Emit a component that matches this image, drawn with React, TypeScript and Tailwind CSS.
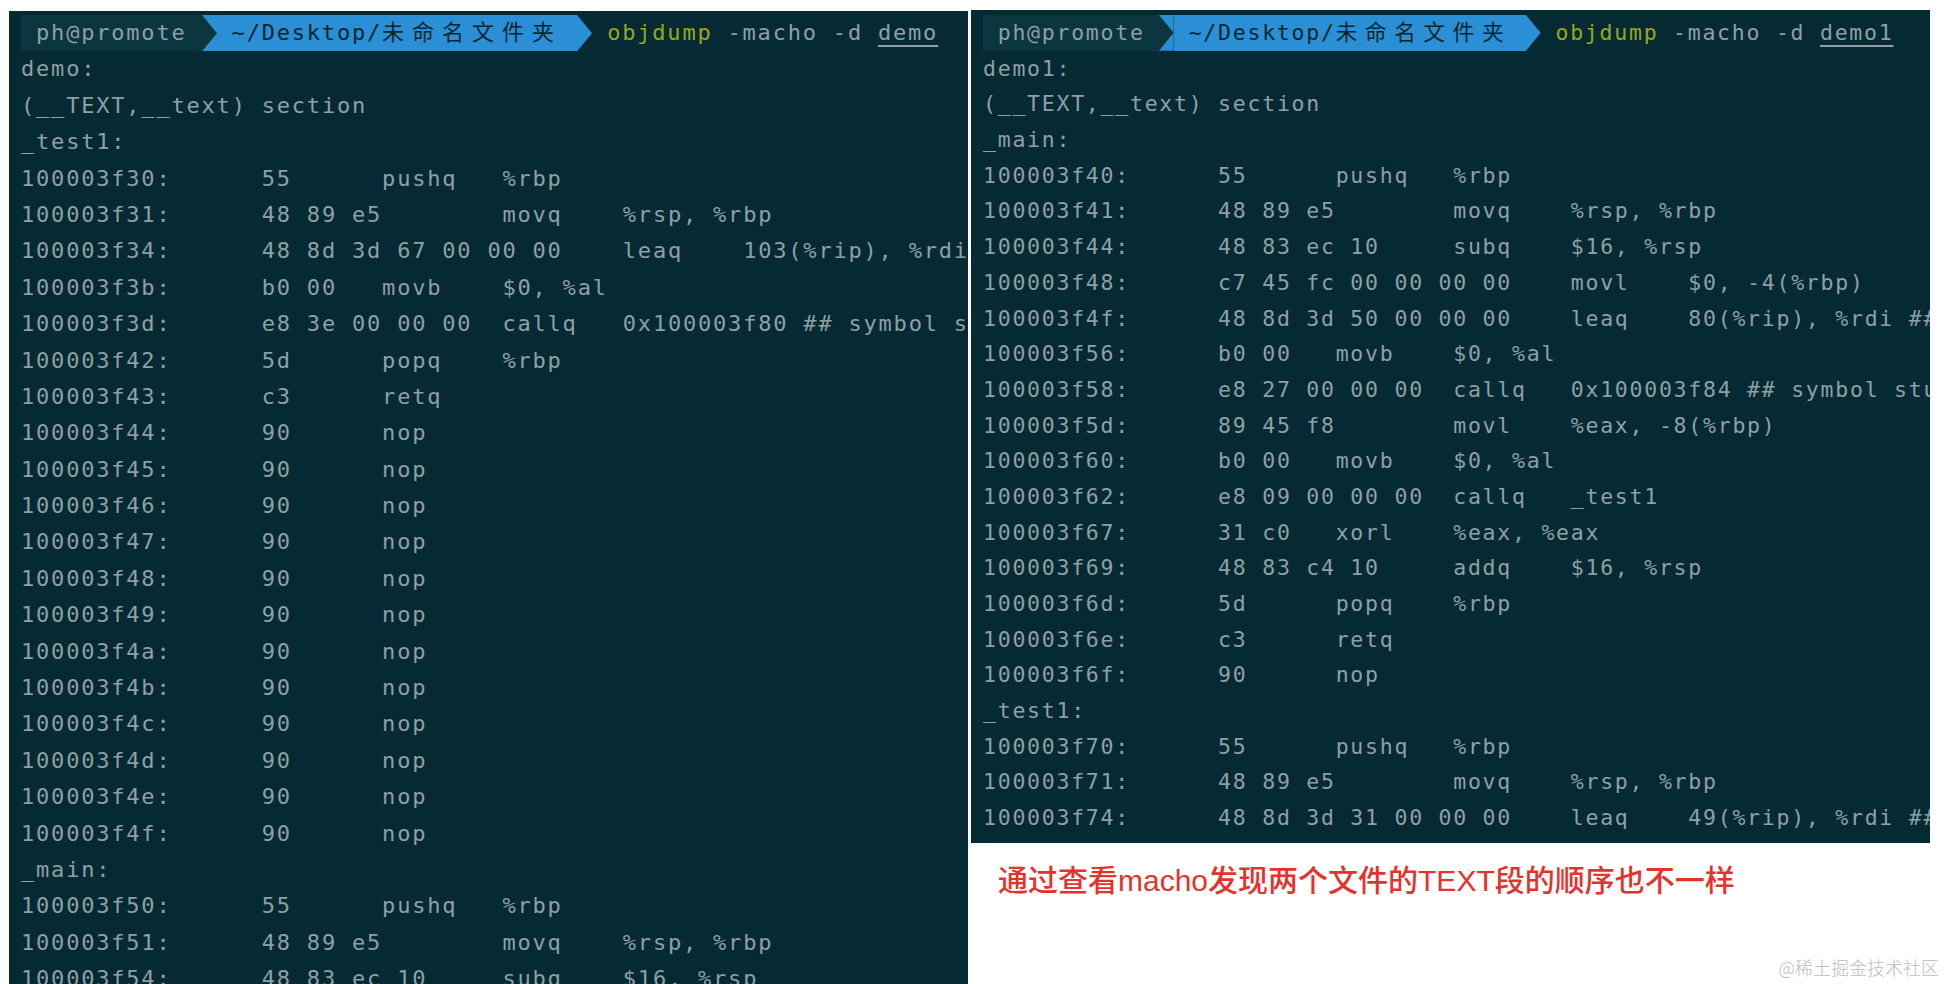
import React from "react";

// expand tabs to 8-column stops, like the terminal does
function expand(s: string) {
  let out = "";
  for (const ch of s) {
    if (ch === "\t") out += " ".repeat(8 - (out.length % 8));
    else out += ch;
  }
  return out;
}

const leftLines = [
  "demo:",
  "(__TEXT,__text) section",
  "_test1:",
  "100003f30:\t55\tpushq\t%rbp",
  "100003f31:\t48 89 e5\tmovq\t%rsp, %rbp",
  '100003f34:\t48 8d 3d 67 00 00 00\tleaq\t103(%rip), %rdi ## literal pool for: "test1\\n"',
  "100003f3b:\tb0 00\tmovb\t$0, %al",
  "100003f3d:\te8 3e 00 00 00\tcallq\t0x100003f80 ## symbol stub for: _printf",
  "100003f42:\t5d\tpopq\t%rbp",
  "100003f43:\tc3\tretq",
  ...["44", "45", "46", "47", "48", "49", "4a", "4b", "4c", "4d", "4e", "4f"].map(
    (a) => `100003f${a}:\t90\tnop`
  ),
  "_main:",
  "100003f50:\t55\tpushq\t%rbp",
  "100003f51:\t48 89 e5\tmovq\t%rsp, %rbp",
  "100003f54:\t48 83 ec 10\tsubq\t$16, %rsp",
];

const rightLines = [
  "demo1:",
  "(__TEXT,__text) section",
  "_main:",
  "100003f40:\t55\tpushq\t%rbp",
  "100003f41:\t48 89 e5\tmovq\t%rsp, %rbp",
  "100003f44:\t48 83 ec 10\tsubq\t$16, %rsp",
  "100003f48:\tc7 45 fc 00 00 00 00\tmovl\t$0, -4(%rbp)",
  '100003f4f:\t48 8d 3d 50 00 00 00\tleaq\t80(%rip), %rdi ## literal pool for: "main\\n"',
  "100003f56:\tb0 00\tmovb\t$0, %al",
  "100003f58:\te8 27 00 00 00\tcallq\t0x100003f84 ## symbol stub for: _printf",
  "100003f5d:\t89 45 f8\tmovl\t%eax, -8(%rbp)",
  "100003f60:\tb0 00\tmovb\t$0, %al",
  "100003f62:\te8 09 00 00 00\tcallq\t_test1",
  "100003f67:\t31 c0\txorl\t%eax, %eax",
  "100003f69:\t48 83 c4 10\taddq\t$16, %rsp",
  "100003f6d:\t5d\tpopq\t%rbp",
  "100003f6e:\tc3\tretq",
  "100003f6f:\t90\tnop",
  "_test1:",
  "100003f70:\t55\tpushq\t%rbp",
  "100003f71:\t48 89 e5\tmovq\t%rsp, %rbp",
  '100003f74:\t48 8d 3d 31 00 00 00\tleaq\t49(%rip), %rdi ## literal pool for: "test1\\n"',
];

function Arrow({ w, from, to }: { w: number; from: string; to: string }) {
  return (
    <svg width={w} height="100%" viewBox="0 0 15 36" preserveAspectRatio="none" className="shrink-0">
      <rect width="15" height="36" fill={to} />
      <path d="M0 0 L15 18 L0 36 Z" fill={from} />
    </svg>
  );
}

function Prompt({ file, cell, rowClass, cjkClass }: { file: string; cell: number; rowClass: string; cjkClass: string }) {
  return (
    <div className={`flex ${rowClass}`}>
      <div className="h-full bg-[#0b3640]">{" ph@promote "}</div>
      <Arrow w={cell} from="#0b3640" to="#2b8fd5" />
      <div className="h-full bg-[#2b8fd5] text-[#06262f]">
        <span>
          {" ~/Desktop/"}
          <span className={cjkClass}>未命名文件夹</span>
          {" "}
        </span>
      </div>
      <Arrow w={cell} from="#2b8fd5" to="#052a34" />
      <div className="h-full">
        <span>
          {" "}
          <span className="text-[#9aa71c]">objdump</span>
          {" -macho -d "}
          <span className="underline decoration-2 underline-offset-[5px]">{file}</span>
        </span>
      </div>
    </div>
  );
}

export default function App() {
  return (
    <div className="flex h-[984px] w-[1946px] overflow-hidden bg-white">
      <div className="ml-[9px] mt-[11px] h-[973px] w-[959px] shrink-0 overflow-hidden bg-[#052a34] pl-[12px] pt-[4px] font-['DejaVu_Sans_Mono','Noto_Sans_CJK_SC',monospace] text-[22px] leading-[36.4px] tracking-[1.8px] text-[#8fa0a3] whitespace-pre">
        <Prompt file="demo" cell={15} rowClass="h-[36.4px]" cjkClass="tracking-[8px]" />
        {leftLines.map((l, i) => (
          <div key={i} className="h-[36.4px]">{expand(l)}</div>
        ))}
      </div>

      <div className="ml-[3px] flex flex-1 flex-col">
        <div className="mt-[10px] h-[833px] w-[959px] overflow-hidden bg-[#052a34] pl-[12px] pt-[5px] font-['DejaVu_Sans_Mono','Noto_Sans_CJK_SC',monospace] text-[21.5px] leading-[35.7px] tracking-[1.75px] text-[#8fa0a3] whitespace-pre">
          <Prompt file="demo1" cell={14.65} rowClass="h-[35.7px]" cjkClass="tracking-[7.8px]" />
          {rightLines.map((l, i) => (
            <div key={i} className="h-[35.7px]">{expand(l)}</div>
          ))}
        </div>

        <p className="ml-[27px] mt-[18px] font-['Liberation_Sans','Noto_Sans_CJK_SC',sans-serif] text-[30px] font-medium leading-[40px] text-[#e5322c]">
          通过查看macho发现两个文件的TEXT段的顺序也不一样
        </p>

        <p className="mr-[7px] mb-[5px] mt-auto self-end font-['Noto_Sans_CJK_SC',sans-serif] text-[18px] font-light leading-[24px] text-[#bdbdbd]">
          @稀土掘金技术社区
        </p>
      </div>
    </div>
  );
}
